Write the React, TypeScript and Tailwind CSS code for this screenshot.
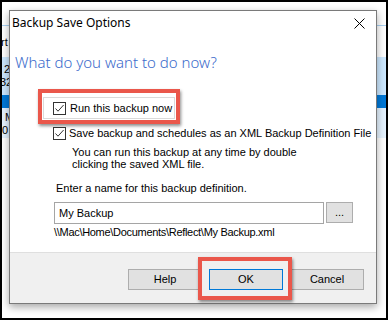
import React from "react";

const body = { fontFamily: '"Liberation Sans", Arial, sans-serif' };
const ui = { fontFamily: '"Noto Sans", "Open Sans", sans-serif' };

function Check() {
  return (
    <svg width="13" height="13" viewBox="0 0 13 13" className="shrink-0">
      <rect x="0.5" y="0.5" width="12" height="12" fill="#fff" stroke="#333" />
      <path d="M2.5 6.5 L5 9.2 L10.6 3" fill="none" stroke="#333" strokeWidth="1" />
    </svg>
  );
}

function Btn({ label, primary }: { label: string; primary?: boolean }) {
  return (
    <div
      className={
        "w-[74px] h-[21px] flex items-center justify-center text-[11px] text-black bg-[#e1e1e1] border " +
        (primary ? "border-[#0078d7]" : "border-[#adadad]")
      }
      style={body}
    >
      {label}
    </div>
  );
}

export default function App() {
  return (
    <div className="w-[388px] h-[320px] relative overflow-hidden bg-white border-2 border-black" style={body}>
      {/* background window */}
      <div className="flex flex-col text-[11px] leading-[13px] text-black">
        <div className="h-[23px]" />
        <div className="h-px bg-[#a9d1f2]" />
        <div className="h-[31px] flex items-center -ml-[1px] pt-[2px]">rt</div>
        <div className="h-[38px] bg-[#cce8ff] flex flex-col pt-[6px]">
          <div className="pl-[2px]">2</div>
          <div className="-ml-[2px]">32</div>
        </div>
        <div className="h-[13px] bg-[#0078d7]" />
        <div className="h-[30px] bg-[#e5f3ff] flex flex-col pt-[3px]">
          <div className="pl-[3px]">M</div>
          <div className="pl-0">0</div>
        </div>
      </div>

      {/* dialog */}
      <div className="absolute left-[7px] top-[8px] w-[368px] h-[294px] bg-white border border-[#7a7a7a] shadow-[0_3px_8px_rgba(0,0,0,0.35)] flex flex-col">
        <div className="h-[24px] flex items-center justify-between pl-[2px] pr-[11px]">
          <span className="text-[12px] text-black" style={ui}>Backup Save Options</span>
          <svg width="11" height="11" viewBox="0 0 11 11">
            <path d="M0.5 0.5 L10.5 10.5 M10.5 0.5 L0.5 10.5" stroke="#000" strokeWidth="1" />
          </svg>
        </div>

        <div className="mt-[16px] ml-[5px] text-[15px] leading-[22px] font-light text-[#3a6acb]" style={ui}>
          What do you want to do now?
        </div>

        <div className="mt-[16px] ml-[28px] w-[142px] h-[35px] border-4 border-[#ea574b] shadow-[1px_2px_3px_rgba(0,0,0,0.45)] pt-[4px] px-px pb-px">
          <div className="h-full border border-[#dadada] flex items-start pl-[9px] pt-[4px] gap-[4px]">
            <Check />
            <span className="text-[11px] leading-[13px] text-black">Run this backup now</span>
          </div>
        </div>

        <div className="mt-[3px] ml-[43px] flex items-start gap-[3px]">
          <Check />
          <span className="text-[11px] leading-[13px] text-black">
            Save backup and schedules as an XML Backup Definition File
          </span>
        </div>

        <div className="mt-[6px] ml-[62px] text-[11px] leading-[12px] text-black">
          <div>You can run this backup at any time by double</div>
          <div>clicking the saved XML file.</div>
        </div>

        <div className="mt-[12px] ml-[46px] text-[11px] leading-[13px] text-black">
          Enter a name for this backup definition.
        </div>

        <div className="mt-[7px] ml-[44px] flex items-start gap-[2px]">
          <div className="w-[270px] h-[22px] border border-[#a5a5a5] bg-white flex items-center pl-[4px] text-[11px] text-black">
            My Backup
          </div>
          <div className="w-[27px] h-[21px] border border-[#adadad] bg-[#e1e1e1] flex items-center justify-center text-[11px] text-black">
            ...
          </div>
        </div>

        <div className="mt-[2px] ml-[44px] text-[11px] leading-[13px] tracking-[-0.3px] text-black">
          \\Mac\Home\Documents\Reflect\My Backup.xml
        </div>

        <div className="mt-auto h-[51px] bg-[#f0f0f0] border-t border-[#dfdfdf] flex items-start justify-end gap-[7px] pr-[12px] pt-[16px]">
          <Btn label="Help" />
          <div className="relative">
            <Btn label="OK" primary />
            <div className="absolute -left-[11px] -top-[12px] w-[94px] h-[43px] border-4 border-[#ea574b] shadow-[1px_2px_3px_rgba(0,0,0,0.45)]" />
          </div>
          <Btn label="Cancel" />
        </div>
      </div>
    </div>
  );
}
